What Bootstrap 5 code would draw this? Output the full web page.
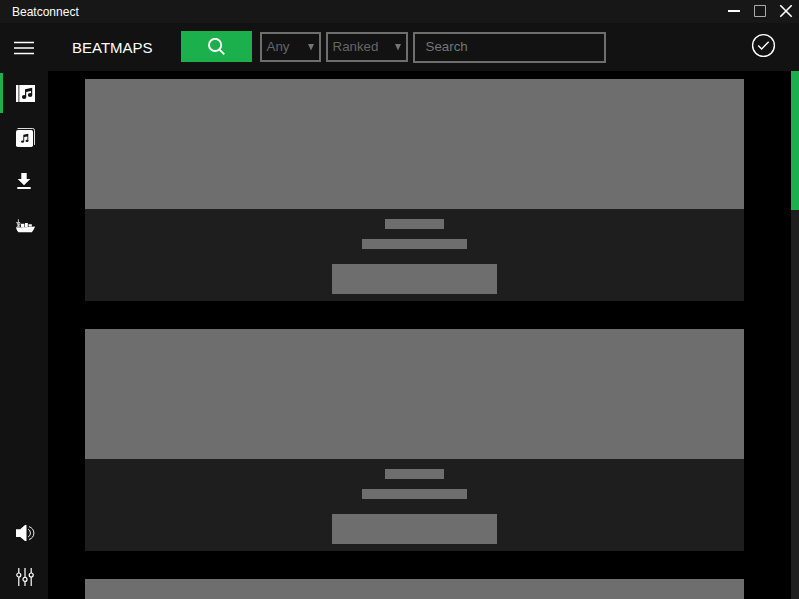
<!DOCTYPE html>
<html lang="en">
<head>
<meta charset="utf-8">
<meta name="viewport" content="width=device-width, initial-scale=1">
<title>Beatconnect</title>
<link href="https://cdn.jsdelivr.net/npm/bootstrap@5.3.0/dist/css/bootstrap.min.css" rel="stylesheet">
<style>
:root { --accent: #1bb04c; --line: #6e6e6e; --panel: #121212; }
body { font-family: "Liberation Sans", Arial, sans-serif; background: #000; color: #fff; }
svg { display: block; flex: none; }
.titlebar { height: 23px; background: #171717; font-size: 12px; line-height: 24px; padding: 0 6px 0 12px; }
.window-controls { gap: 12px; margin-bottom: 1px; }
.topbar { height: 48px; background: var(--panel); padding: 0 23px 0 14px; }
.menu-icon { margin-top: 1px; }
.page-title { font-size: 15px; line-height: 20px; width: 109px; margin-left: 38px; padding-top: 1px; }
.search-btn { width: 71px; height: 31px; background: var(--accent); border: 0; margin-right: 8px; margin-bottom: 1px; }
.search-btn:hover { background: var(--accent); }
.filter { height: 30px; border: 2px solid var(--line); color: #656565; font-size: 13.333px; padding: 0 5px 0 4.5px; background: var(--panel); margin-right: 5px; line-height: 26px; }
.filter-any { width: 61px; }
.filter-status { width: 82px; }
.search-input, .search-input:focus { width: 193px; height: 31px; border: 2px solid var(--line); background: var(--panel); color: #fff; font-size: 13.333px; padding: 0 10px 2px 10.5px; box-shadow: none; margin-top: 1px; }
.search-input::placeholder { color: #757575; }
.sidebar { width: 48px; background: var(--panel); }
.side-item { height: 44px; padding: 2px 0; }
.side-link { height: 40px; border-left: 3px solid transparent; padding-left: 12px; }
.side-link.current { border-color: var(--accent); }
.feed { padding: 8px 47px 0 37px; }
.beatmap { background: #1e1e1e; height: 222px; margin-bottom: 28px; flex: none; }
.bone { background: #6e6e6e; }
.cover { height: 130px; }
.bone-title { width: 59px; height: 10px; margin-top: 10px; }
.bone-artist { width: 105px; height: 10px; margin-top: 10px; }
.bone-action { width: 165px; height: 30px; margin-top: 15px; }
.scroll-track { width: 8px; background: #1e1e1e; }
.scroll-thumb { height: 139px; background: var(--accent); }
</style>
<script src="https://cdn.jsdelivr.net/npm/bootstrap@5.3.0/dist/js/bootstrap.bundle.min.js"></script>
</head>
<body class="vh-100 overflow-hidden d-flex flex-column">
<header class="titlebar d-flex justify-content-between align-items-center flex-shrink-0">
  <span>Beatconnect</span>
  <div class="window-controls d-flex align-items-center">
    <svg width="14" height="14" viewBox="0 0 14 14"><path d="M1 7h12" stroke="#fff" stroke-width="2"/></svg>
    <svg width="14" height="14" viewBox="0 0 14 14"><path d="M1.500 1.500h11v11h-11z" fill="none" stroke="#aaa"/></svg>
    <svg width="14" height="14" viewBox="0 0 14 14"><path d="M1.300 1.300l11.400 11.400M12.700 1.300L1.300 12.700" stroke="#fff" stroke-width="1.600"/></svg>
  </div>
</header>
<nav class="topbar d-flex align-items-center flex-shrink-0">
  <svg class="menu-icon" width="20" height="21" viewBox="0 0 20 21" stroke="#fff" stroke-width="1.500"><path d="M0 5.400h20M0 11h20M0 16.500h20"/></svg>
  <div class="page-title">BEATMAPS</div>
  <button class="search-btn btn rounded-0 p-0 d-flex align-items-center justify-content-center" aria-label="Search">
    <svg width="17" height="17" viewBox="0 0 17 17" fill="none" stroke="#fff" stroke-width="1.900"><circle cx="7.100" cy="6.900" r="6.100"/><path d="M11.300 11.300l5 5"/></svg>
  </button>
  <div class="filter filter-any d-flex justify-content-between align-items-center"><span>Any</span><svg width="6" height="7" viewBox="0 0 6 7"><path d="M0 0h6L3 6.500z" fill="#757575"/></svg></div>
  <div class="filter filter-status d-flex justify-content-between align-items-center"><span>Ranked</span><svg width="6" height="7" viewBox="0 0 6 7"><path d="M0 0h6L3 6.500z" fill="#757575"/></svg></div>
  <input class="search-input form-control rounded-0" type="text" placeholder="Search" aria-label="Search beatmaps">
  <svg class="ms-auto mb-1" width="25" height="25" viewBox="0 0 25 25" fill="none" stroke="#fff" stroke-width="1.400"><circle cx="12.500" cy="12.500" r="10.900"/><path d="M7.200 12.500l3.500 3.400 7-7.100"/></svg>
</nav>
<div class="d-flex flex-grow-1 overflow-hidden">
  <aside class="sidebar d-flex flex-column justify-content-between flex-shrink-0">
    <div>
      <div class="side-item"><div class="side-link current d-flex align-items-center">
        <svg width="20" height="20" viewBox="0 0 20 20"><path d="M1 2h2.500v17H1zM4.300 2H20v17H4.300z" fill="#fff"/><path d="M10 6.200l7.200-1.500v7H16V8l-4.800 1v5H10z" fill="#121212"/><ellipse cx="9.100" cy="14" rx="2.200" ry="1.900" fill="#121212"/><ellipse cx="15.100" cy="12" rx="2.200" ry="1.900" fill="#121212"/></svg>
      </div></div>
      <div class="side-item"><div class="side-link d-flex align-items-center">
        <svg width="20" height="20" viewBox="0 0 20 20"><rect x="1" y="3" width="17" height="17" rx="1.800" fill="#fff"/><path d="M2.500 1.500h15.200q1.800 0 1.800 1.800v14.600" fill="none" stroke="#ddd"/><path d="M8.300 7.800l5-1v7.300h-.9V9.400l-3.200.7v4.700h-.9z" fill="#121212"/><ellipse cx="7.500" cy="14.700" rx="1.500" ry="1.100" fill="#121212"/><ellipse cx="12" cy="13.900" rx="1.500" ry="1.100" fill="#121212"/></svg>
      </div></div>
      <div class="side-item"><div class="side-link d-flex align-items-center">
        <svg width="20" height="20" viewBox="0 0 20 20" fill="#fff"><path d="M6.300 2h5.400v6h3.600L9 14.300 2.700 8h3.600zM2.300 16h13.400v2H2.300z"/></svg>
      </div></div>
      <div class="side-item"><div class="side-link d-flex align-items-center">
        <svg width="20" height="20" viewBox="0 0 20 20" fill="#fff"><path d="M1 12.300l6 .3 13-1.100c-.8 2.400-1.900 4.300-3.200 5.700H3.500C2.200 16.200 1.300 14.300 1 12.300zM6 8.800h3.400v3.400H6zM10 7.900h2.800v4.100H10zM13.500 9.200h3.300v2.200h-3.300z"/><path d="M3.400 4.200v8M1.200 7.500h4M2 12l3.300-4M2 8l3 4M2 9.800h3.500" stroke="#ccc" stroke-width=".9" fill="none"/></svg>
      </div></div>
    </div>
    <div>
      <div class="side-item"><div class="side-link d-flex align-items-center">
        <svg width="20" height="20" viewBox="0 0 20 20"><path d="M1 6.200h4.200v7.800H1zM5.200 6.200L10 2h1.500v16H10l-4.800-4z" fill="#fff"/><path d="M13.200 6.300q2.200 1 2.200 3.800t-2.200 3.800M14 3.700c3 .8 4.900 3.400 4.900 6.400s-1.900 5.600-4.900 6.400" fill="none" stroke="#eee" stroke-width="1"/></svg>
      </div></div>
      <div class="side-item"><div class="side-link d-flex align-items-center">
        <svg width="20" height="20" viewBox="0 0 20 20" fill="none" stroke="#fff" stroke-width="1.200"><path d="M3.800 1v5M3.800 10v9M10 1v9.500M10 14.500V19M16.200 1v5M16.200 10v9"/><circle cx="3.800" cy="8" r="2"/><circle cx="10" cy="12.400" r="2"/><circle cx="16.200" cy="8" r="2"/></svg>
      </div></div>
    </div>
  </aside>
  <main class="feed flex-grow-1 d-flex flex-column overflow-hidden">
    <article class="beatmap d-flex flex-column align-items-center"><div class="bone cover w-100"></div><div class="bone bone-title"></div><div class="bone bone-artist"></div><div class="bone bone-action"></div></article>
    <article class="beatmap d-flex flex-column align-items-center"><div class="bone cover w-100"></div><div class="bone bone-title"></div><div class="bone bone-artist"></div><div class="bone bone-action"></div></article>
    <article class="beatmap d-flex flex-column align-items-center"><div class="bone cover w-100"></div><div class="bone bone-title"></div><div class="bone bone-artist"></div><div class="bone bone-action"></div></article>
  </main>
  <div class="scroll-track flex-shrink-0"><div class="scroll-thumb"></div></div>
</div>
</body>
</html>
